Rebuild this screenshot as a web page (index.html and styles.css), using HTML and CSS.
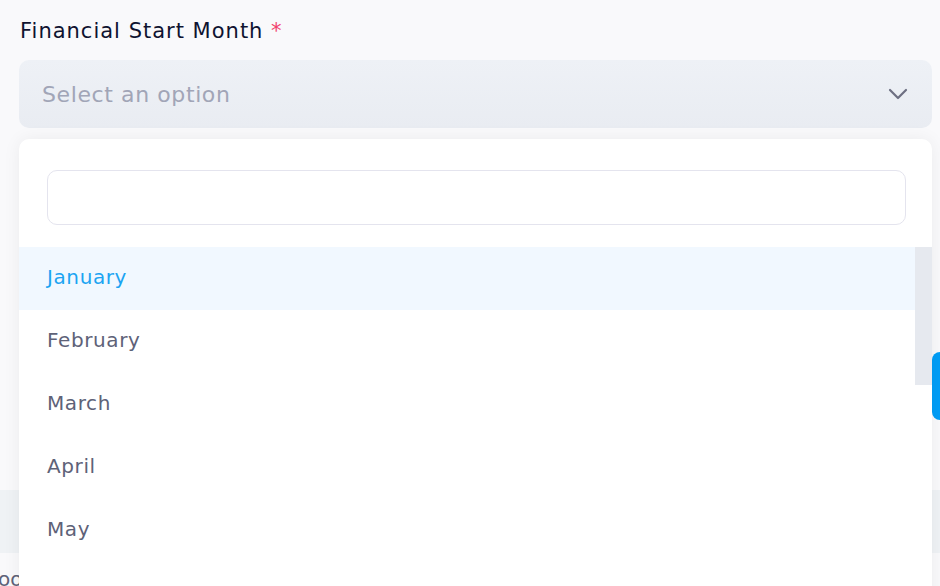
FILE: index.html
```html
<!DOCTYPE html>
<html lang="en">
<head>
  <meta charset="UTF-8">
  <title>Financial Start Month</title>
  <link rel="stylesheet" href="styles.css">
</head>
<body>
  <div class="page">
    <div class="form-group">
      <label class="form-label">Financial Start Month <span class="required">*</span></label>
      <div class="select">
        <span class="select-placeholder">Select an option</span>
        <svg class="select-arrow" width="20" height="12" viewBox="0 0 20 12">
          <path d="M2 2 L10 10 L18 2" fill="none" stroke="#6d6f82" stroke-width="2.2" stroke-linecap="round" stroke-linejoin="round"/>
        </svg>
      </div>

      <div class="dropdown">
        <div class="dropdown-search">
          <input type="text" class="search-input">
        </div>
        <div class="dropdown-body">
          <ul class="options">
            <li class="option active">January</li>
            <li class="option">February</li>
            <li class="option">March</li>
            <li class="option">April</li>
            <li class="option">May</li>
          </ul>
          <div class="scroll-track">
            <div class="scroll-thumb"></div>
          </div>
        </div>
      </div>
    </div>

    <div class="behind">
      <div class="behind-actions">
        <span class="btn-primary"></span>
      </div>
      <div class="table-head"></div>
      <div class="table-row">oo</div>
    </div>
  </div>
</body>
</html>
```

FILE: styles.css
```css
body {
  margin: 0;
  font-family: 'DejaVu Sans', sans-serif;
  background: #f9f9fb;
  overflow: hidden;
}

.page {
  height: 586px;
  overflow: hidden;
}

.form-group {
  position: relative;
  padding: 16px 8px 0 19px;
}

.form-label {
  display: block;
  font-size: 21px;
  letter-spacing: 1px;
  line-height: 30px;
  color: #0f1330;
  padding-left: 1px;
  margin-bottom: 14px;
}

.required {
  color: #f1416c;
}

.select {
  height: 68px;
  border-radius: 10px;
  background: linear-gradient(#eef1f6, #e9ecf2);
  display: flex;
  align-items: center;
  justify-content: space-between;
  padding: 0 24px 0 23px;
}

.select-placeholder {
  font-size: 22px;
  letter-spacing: 0.6px;
  color: #a1a5b7;
}

.dropdown {
  position: absolute;
  top: 139px;
  left: 19px;
  right: 8px;
  height: 470px;
  background: #fff;
  border-radius: 10px;
  box-shadow: 0 0 18px rgba(0, 0, 0, 0.06);
  z-index: 2;
}

.dropdown-search {
  padding: 31px 26px 22px 28px;
}

.search-input {
  display: block;
  box-sizing: border-box;
  width: 100%;
  height: 55px;
  border: 1px solid #e4e4ee;
  border-radius: 10px;
  background: #fff;
  outline: none;
}

.dropdown-body {
  display: flex;
}

.options {
  flex: 1;
  list-style: none;
  margin: 0;
  padding: 0;
}

.option {
  height: 63px;
  line-height: 61px;
  padding-left: 28px;
  font-size: 20px;
  letter-spacing: 0.6px;
  color: #5e6278;
}

.option.active {
  background: #f1f8ff;
  color: #1ba4f2;
}

.scroll-track {
  width: 17px;
}

.scroll-thumb {
  height: 138px;
  background: #e6e9ef;
}

.behind {
  position: relative;
}

.behind-actions {
  display: flex;
  justify-content: flex-end;
  padding-top: 224px;
  height: 68px;
}

.btn-primary {
  width: 10px;
  height: 68px;
  margin-right: -2px;
  background: #009ef7;
  border-radius: 8px 0 0 8px;
}

.table-head {
  margin-top: 70px;
  height: 63px;
  background: #eff2f5;
}

.table-row {
  padding-top: 14px;
  font-size: 20px;
  line-height: 24px;
  color: #5e6278;
  margin-left: -2px;
}
```
